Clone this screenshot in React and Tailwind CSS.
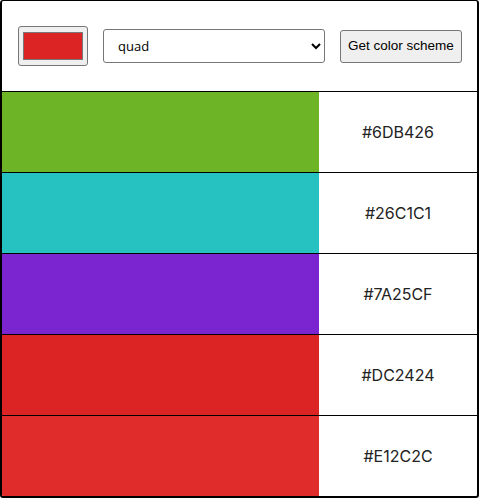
import React, { useState } from 'react';

const colors = ['#6DB426', '#26C1C1', '#7A25CF', '#DC2424', '#E12C2C'];

export default function App() {
    const [seed, setSeed] = useState('#dc2424');
    const [mode, setMode] = useState('quad');

    return (
        <div className="w-[479px] h-[498px] bg-white overflow-hidden">
            <div className="h-full border-t border-l-2 border-r-2 border-b-2 border-black rounded-[3px] overflow-hidden flex flex-col">
                {/* header */}
                <div className="h-[90px] flex items-center pl-[16px] pr-[14px] shrink-0">
                    <input
                        type="color"
                        value={seed}
                        onChange={(e) => setSeed(e.target.value)}
                        className="w-[70px] h-[40px] shrink-0 bg-[#efefef] border border-[#767676] rounded-[3px] px-[2px] py-[1px] cursor-pointer"
                    />
                    <select
                        value={mode}
                        onChange={(e) => setMode(e.target.value)}
                        className="ml-[15px] w-[222px] h-[34px] border border-[#767676] rounded-[3px] bg-white pl-[10px] pr-1 text-[13px] text-black"
                        style={{ fontFamily: '"Open Sans", "Noto Sans", sans-serif' }}
                    >
                        <option>monochrome</option>
                        <option>analogic</option>
                        <option>complement</option>
                        <option>triad</option>
                        <option value="quad">quad</option>
                    </select>
                    <button
                        className="ml-[15px] h-[33px] px-[7px] bg-[#efefef] border border-[#767676] rounded-[3px] text-[13.5px] text-black whitespace-nowrap"
                        style={{ fontFamily: '"Liberation Sans", Arial, sans-serif' }}
                    >
                        Get color scheme
                    </button>
                </div>

                {/* scheme rows */}
                <div className="flex-1 flex flex-col">
                    {colors.map((hex) => (
                        <div key={hex} className="flex-1 flex border-t border-black">
                            <div className="w-[317px]" style={{ backgroundColor: hex }} />
                            <div
                                className="flex-1 flex items-center justify-center text-[16px] text-[#222]"
                                style={{ fontFamily: 'Inter, "Noto Sans", sans-serif' }}
                            >
                                {hex}
                            </div>
                        </div>
                    ))}
                </div>
            </div>
        </div>
    );
}
